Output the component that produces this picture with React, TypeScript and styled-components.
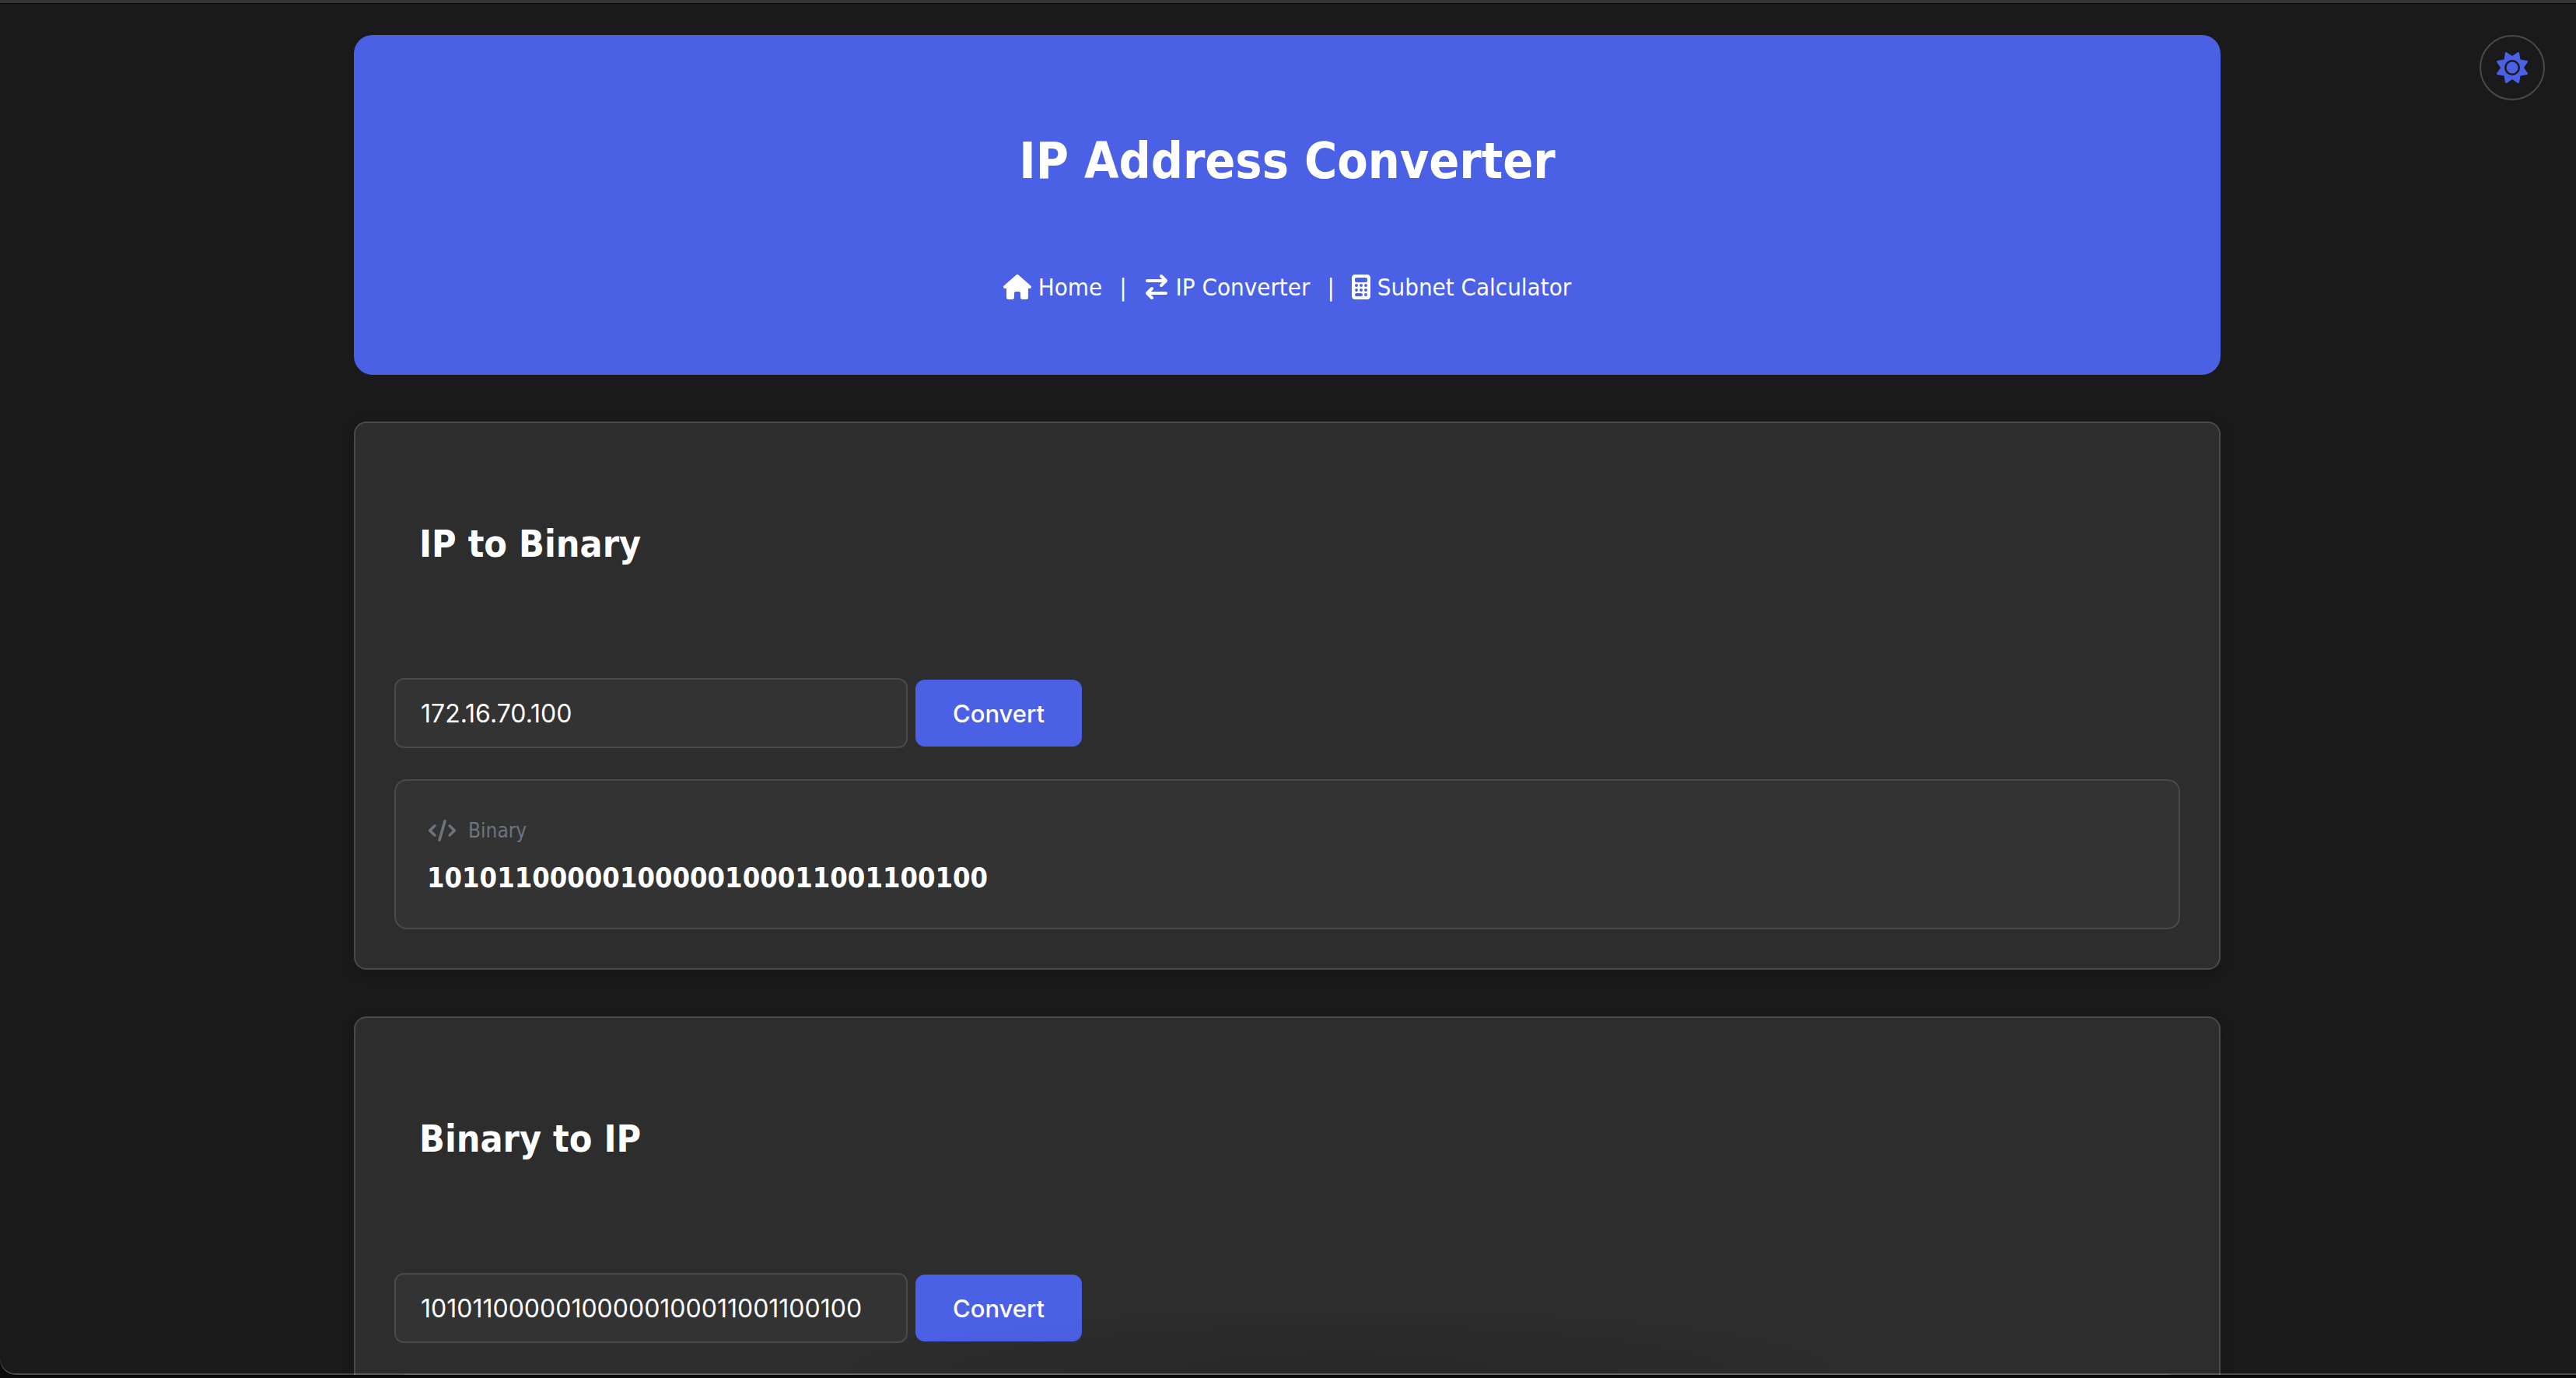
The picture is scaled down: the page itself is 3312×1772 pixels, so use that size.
import React, { useState } from "react";
import styled, { createGlobalStyle } from "styled-components";
import {
  FaHouse,
  FaArrowRightArrowLeft,
  FaCalculator,
  FaCode,
  FaSun,
  FaNetworkWired,
} from "react-icons/fa6";

const sans = `Tahoma, "DejaVu Sans Condensed", "DejaVu Sans", sans-serif`;
const ui = `Inter, "Liberation Sans", sans-serif`;

const GlobalStyle = createGlobalStyle`
  *, *::before, *::after { box-sizing: border-box; }
  body { margin: 0; background: #000; font-family: ${sans}; font-stretch: condensed; color: #fff; }
`;

const Screen = styled.div`
  height: 100vh;
  display: flex;
  flex-direction: column;
  background: #0b0b0a;
`;

const ToolbarEdge = styled.div`
  flex: none;
  height: 5px;
  background: #343436;
  border-bottom: 1px solid #0c0c0c;
`;

const Viewport = styled.div`
  position: relative;
  flex: 1;
  min-height: 0;
  overflow: hidden;
  margin-bottom: 4px;
  padding: 40px 42px 0 40px;
  background: #1a1a1a;
  border-bottom-left-radius: 20px;
  box-shadow: 0 1px 0 #000;

  &::after {
    content: "";
    position: absolute;
    inset: 0 -2px 0 -2px;
    border: 2px solid rgba(255, 255, 255, 0.22);
    border-top: 0;
    border-bottom-left-radius: 22px;
    background: radial-gradient(ellipse 640px 80px at 52% 100%, rgba(0, 0, 0, 0.1), transparent) no-repeat;
    pointer-events: none;
  }
`;

const ThemeToggle = styled.button`
  position: absolute;
  top: 40px;
  right: 40px;
  width: 84px;
  height: 84px;
  display: flex;
  align-items: center;
  justify-content: center;
  padding: 0;
  border: 2px solid #4a4a4a;
  border-radius: 50%;
  background: #1a1a1a;
  color: #4a61e5;
  font-size: 40px;
  cursor: pointer;
`;

const Container = styled.div`
  max-width: 2400px;
  margin: 0 auto;
  display: flex;
  flex-direction: column;
  gap: 60px;
`;

const Header = styled.header`
  display: flex;
  flex-direction: column;
  align-items: center;
  gap: 92px;
  padding: 122px 40px 83px;
  border-radius: 24px;
  background: #4a61e5;
`;

const Title = styled.h1`
  margin: 0;
  font-size: 64px;
  line-height: 80px;
  font-weight: 700;
`;

const Nav = styled.nav`
  display: flex;
  align-items: center;
  font-size: 31px;
  line-height: 60px;
`;

const NavLink = styled.a<{ $iconWidth: number }>`
  display: flex;
  align-items: center;
  gap: 9px;
  color: #fff;
  text-decoration: none;

  svg {
    width: ${(p) => p.$iconWidth}px;
    height: 32px;
  }
`;

const Divider = styled.span`
  margin: 0 22px;
`;

const Card = styled.section`
  padding: 50px;
  border: 2px solid #4a4a4a;
  border-radius: 16px;
  background: #2d2d2d;
  box-shadow: 0 4px 16px rgba(0, 0, 0, 0.2);
`;

const CardTitle = styled.h2`
  margin: 0;
  padding: 75px 32px 125px;
  font-size: 48px;
  line-height: 60px;
  font-weight: 700;
`;

const Form = styled.form`
  display: flex;
  align-items: center;
  gap: 10px;
  margin: 18px 0 40px;
`;

const TextInput = styled.input`
  width: 660px;
  height: 90px;
  padding: 0 32px;
  border: 2px solid #4a4a4a;
  border-radius: 12px;
  outline: none;
  background: #333;
  color: #fff;
  font-family: ${ui};
  font-size: 32px;
`;

const SubmitButton = styled.button`
  height: 86px;
  padding: 0 48px;
  border: 0;
  border-radius: 12px;
  background: #4a61e5;
  color: #fff;
  font-family: ${ui};
  font-size: 31px;
  font-weight: 500;
  cursor: pointer;
`;

const Result = styled.div`
  display: flex;
  flex-direction: column;
  gap: 4px;
  min-height: 193px;
  padding: 39px 40px 33px;
  border: 2px solid #4a4a4a;
  border-radius: 16px;
  background: #333;
`;

const ResultLabel = styled.div`
  display: flex;
  align-items: center;
  gap: 16px;
  padding-left: 2px;
  color: #6c757d;
  font-size: 26px;
  line-height: 50px;

  svg {
    width: 35px;
    height: 28px;
  }
`;

const ResultValue = styled.output`
  display: block;
  font-size: 36px;
  line-height: 63px;
  font-weight: 700;
`;

const toBinary = (ip: string) =>
  ip.split(".").map((part) => Number(part).toString(2).padStart(8, "0")).join("");

const toAddress = (bits: string) =>
  (bits.match(/.{8}/g) ?? []).map((octet) => parseInt(octet, 2)).join(".");

type ConverterProps = {
  title: string;
  initial: string;
  initialResult?: string;
  label: string;
  icon: React.ReactNode;
  convert: (value: string) => string;
};

function Converter({ title, initial, initialResult = "", label, icon, convert }: ConverterProps) {
  const [value, setValue] = useState(initial);
  const [result, setResult] = useState(initialResult);
  return (
    <Card>
      <CardTitle>{title}</CardTitle>
      <Form
        onSubmit={(event) => {
          event.preventDefault();
          setResult(convert(value));
        }}
      >
        <TextInput aria-label={title} value={value} onChange={(event) => setValue(event.target.value)} />
        <SubmitButton type="submit">Convert</SubmitButton>
      </Form>
      <Result>
        {result && (
          <>
            <ResultLabel>
              {icon}
              {label}
            </ResultLabel>
            <ResultValue>{result}</ResultValue>
          </>
        )}
      </Result>
    </Card>
  );
}

export default function App() {
  return (
    <Screen>
      <GlobalStyle />
      <ToolbarEdge />
      <Viewport>
        <Container>
          <Header>
            <Title>IP Address Converter</Title>
            <Nav>
              <NavLink href="#home" $iconWidth={36}><FaHouse />Home</NavLink>
              <Divider>|</Divider>
              <NavLink href="#converter" $iconWidth={32}><FaArrowRightArrowLeft />IP Converter</NavLink>
              <Divider>|</Divider>
              <NavLink href="#subnet" $iconWidth={24}><FaCalculator />Subnet Calculator</NavLink>
            </Nav>
          </Header>
          <Converter
            title="IP to Binary"
            initial="172.16.70.100"
            initialResult={toBinary("172.16.70.100")}
            label="Binary"
            icon={<FaCode />}
            convert={toBinary}
          />
          <Converter
            title="Binary to IP"
            initial="10101100000100000100011001100100"
            label="IP Address"
            icon={<FaNetworkWired />}
            convert={toAddress}
          />
        </Container>
        <ThemeToggle type="button" aria-label="Toggle theme"><FaSun /></ThemeToggle>
      </Viewport>
    </Screen>
  );
}
